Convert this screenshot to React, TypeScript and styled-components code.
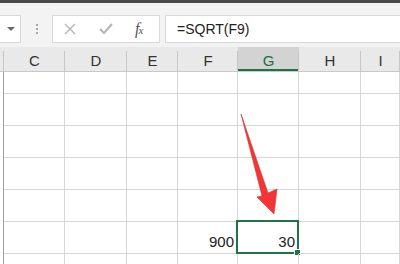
import styled, { createGlobalStyle } from "styled-components";

const GlobalStyle = createGlobalStyle`
  html, body {
    margin: 0;
    padding: 0;
    background: #fff;
  }
`;

const COLS = "4px 61px 62px 51px 60px 61px 62px 1fr";

const Screen = styled.div`
  position: relative;
  width: 400px;
  height: 264px;
  overflow: hidden;
  display: flex;
  flex-direction: column;
  font-family: "Liberation Sans", Arial, sans-serif;
  background: #fff;
`;

const TopEdge = styled.div`
  height: 3px;
  flex-shrink: 0;
  background: #4a4a4a;
`;

const Toolbar = styled.div`
  height: 44px;
  flex-shrink: 0;
  box-sizing: border-box;
  background: #f3f3f3;
  display: flex;
  align-items: flex-end;
  padding-bottom: 4px;
`;

const Box = styled.div<{ $width?: number }>`
  height: 28px;
  box-sizing: border-box;
  background: #fff;
  border: 1px solid #d9d9d9;
  display: flex;
  align-items: center;
  ${(p) => (p.$width ? `width: ${p.$width}px;` : "flex: 1;")}
`;

const NameBox = styled(Box)`
  border-left: 0;
  justify-content: center;
  padding-left: 1px;
`;

const Caret = styled.span`
  width: 0;
  height: 0;
  border-left: 4px solid transparent;
  border-right: 4px solid transparent;
  border-top: 4px solid #6a6a6a;
`;

const Grip = styled.div`
  width: 31px;
  height: 28px;
  display: flex;
  flex-direction: column;
  align-items: center;
  justify-content: center;
  gap: 2px;
`;

const Dot = styled.span`
  width: 2px;
  height: 2px;
  background: #a8a8a8;
`;

const FxButtons = styled(Box)`
  margin-right: 5px;
  gap: 21px;
  padding-left: 10px;
`;

const FxLabel = styled.span`
  font-family: "Liberation Serif", "Times New Roman", serif;
  font-style: italic;
  font-size: 16px;
  color: #555;
  letter-spacing: -1px;
`;

const Sub = styled.span`
  font-size: 11px;
`;

const FormulaBox = styled(Box)`
  border-right: 0;
  padding-left: 11px;
  font-size: 14px;
  color: #222;
`;

const Sheet = styled.div`
  flex: 1;
  min-height: 0;
  overflow: hidden;
  display: flex;
  flex-direction: column;
`;

const HeaderRow = styled.div`
  display: grid;
  grid-template-columns: ${COLS};
  height: 25px;
  flex-shrink: 0;
  background: #e9e9e9;
  box-sizing: border-box;
  border-bottom: 1px solid #c9c9c9;
`;

const HeaderCell = styled.div<{ $active?: boolean }>`
  position: relative;
  display: flex;
  align-items: center;
  justify-content: center;
  font-size: 15px;
  color: ${(p) => (p.$active ? "#1e6b40" : "#333")};
  background: ${(p) => (p.$active ? "#d3d3d3" : "transparent")};
  box-shadow: ${(p) => (p.$active ? "inset 0 -2px 0 #217346" : "none")};
  padding-top: 2px;

  &::after {
    content: "";
    position: absolute;
    right: 0;
    top: 4px;
    bottom: 0;
    width: 1px;
    background: #c6c6c6;
  }
`;

const Row = styled.div<{ $h: number }>`
  display: grid;
  grid-template-columns: ${COLS};
  height: ${(p) => p.$h}px;
  flex-shrink: 0;
`;

const Cell = styled.div<{ $edge?: boolean }>`
  position: relative;
  box-sizing: border-box;
  border-bottom: 1px solid #d6d6d6;
  border-right: 1px solid ${(p) => (p.$edge ? "#9e9e9e" : "#d6d6d6")};
  ${(p) => (p.$edge ? "border-bottom: 0;" : "")}
  display: flex;
  align-items: flex-end;
  justify-content: flex-end;
  padding: 0 3px 3px 0;
  font-size: 15px;
  color: #222;
`;

const Selection = styled.div`
  position: absolute;
  left: -2px;
  top: -2px;
  right: -1px;
  bottom: -1px;
  border: 2px solid #217346;
  pointer-events: none;
`;

const Handle = styled.span`
  position: absolute;
  right: -4px;
  bottom: -4px;
  width: 5px;
  height: 5px;
  background: #217346;
  border: 1px solid #fff;
`;

const Overlay = styled.svg`
  position: absolute;
  left: 0;
  top: 0;
  pointer-events: none;
`;

const columns = ["C", "D", "E", "F", "G", "H", "I"];

const rows: { h: number; f?: string; g?: string }[] = [
  { h: 22 },
  { h: 32 },
  { h: 32 },
  { h: 32 },
  { h: 32 },
  { h: 32, f: "900", g: "30" },
  { h: 32 },
];

export default function App() {
  return (
    <>
      <GlobalStyle />
      <Screen>
        <TopEdge />
        <Toolbar>
          <NameBox $width={21}>
            <Caret />
          </NameBox>
          <Grip>
            <Dot />
            <Dot />
            <Dot />
          </Grip>
          <FxButtons $width={108}>
            <svg width="14" height="14" viewBox="0 0 14 14">
              <path d="M2 2 L12 12 M12 2 L2 12" stroke="#b4b4b4" strokeWidth="1.4" />
            </svg>
            <svg width="16" height="14" viewBox="0 0 16 14">
              <path d="M2 7 L6 11 L14 2" stroke="#b4b4b4" strokeWidth="2" fill="none" />
            </svg>
            <FxLabel>
              f<Sub>x</Sub>
            </FxLabel>
          </FxButtons>
          <FormulaBox>=SQRT(F9)</FormulaBox>
        </Toolbar>
        <Sheet>
          <HeaderRow>
            <HeaderCell />
            {columns.map((c) => (
              <HeaderCell key={c} $active={c === "G"}>
                {c}
              </HeaderCell>
            ))}
          </HeaderRow>
          {rows.map((r, i) => (
            <Row key={i} $h={r.h}>
              <Cell $edge />
              {columns.map((c) => (
                <Cell key={c}>
                  {c === "F" && r.f}
                  {c === "G" && r.g}
                  {c === "G" && r.g && (
                    <Selection>
                      <Handle />
                    </Selection>
                  )}
                </Cell>
              ))}
            </Row>
          ))}
        </Sheet>
        <Overlay width="400" height="264" viewBox="0 0 400 264">
          <polygon
            points="241,114 268,193 277,189 274,214 257,197 262,196"
            fill="#f23636"
            stroke="#e02a2a"
            strokeWidth="0.6"
            strokeLinejoin="round"
          />
        </Overlay>
      </Screen>
    </>
  );
}
